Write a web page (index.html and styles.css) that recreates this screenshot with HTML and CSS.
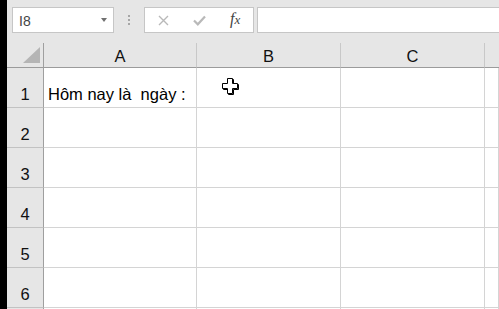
FILE: index.html
```html
<!DOCTYPE html>
<html>
<head>
<meta charset="utf-8">
<link rel="stylesheet" href="styles.css">
</head>
<body>
<div class="app">
  <div class="edge"></div>
  <div class="main">
    <div class="formula-row">
      <div class="namebox">
        <span class="name">I8</span>
        <span class="dd"></span>
      </div>
      <div class="grip"><i></i><i></i><i></i></div>
      <div class="fbtns">
        <svg class="ico x" width="11" height="11" viewBox="0 0 11 11"><path d="M1 1 L10 10 M10 1 L1 10" stroke="#b9b9b9" stroke-width="1.4" fill="none"/></svg>
        <svg class="ico ok" width="13" height="11" viewBox="0 0 13 11"><path d="M1 5.5 L4.8 9.3 L12 1.5" stroke="#b9b9b9" stroke-width="2.2" fill="none"/></svg>
        <span class="fx">f<span class="fxx">x</span></span>
      </div>
      <div class="fbar"></div>
    </div>
    <div class="grid">
      <div class="corner"><span class="tri"></span></div>
      <div class="ch">A</div>
      <div class="ch">B</div>
      <div class="ch">C</div>
      <div class="ch last"></div>

      <div class="rh">1</div>
      <div class="cell"><span class="txt">Hôm nay là  ngày :</span></div>
      <div class="cell"></div><div class="cell"></div><div class="cell"></div>

      <div class="rh">2</div>
      <div class="cell"></div><div class="cell"></div><div class="cell"></div><div class="cell"></div>

      <div class="rh">3</div>
      <div class="cell"></div><div class="cell"></div><div class="cell"></div><div class="cell"></div>

      <div class="rh">4</div>
      <div class="cell"></div><div class="cell"></div><div class="cell"></div><div class="cell"></div>

      <div class="rh">5</div>
      <div class="cell"></div><div class="cell"></div><div class="cell"></div><div class="cell"></div>

      <div class="rh">6</div>
      <div class="cell"></div><div class="cell"></div><div class="cell"></div><div class="cell"></div>

      <div class="rh"></div>
      <div class="cell"></div><div class="cell"></div><div class="cell"></div><div class="cell"></div>
    </div>
  </div>
  <svg class="cursor" width="18" height="18" viewBox="0 0 18 18">
    <path d="M6.5 1.5 H11.5 V6.5 H16.5 V11.5 H11.5 V16.5 H6.5 V11.5 H1.5 V6.5 H6.5 Z" fill="none" stroke="#000" stroke-width="1"/>
    <path d="M5.5 0.5 H10.5 V5.5 H15.5 V10.5 H10.5 V15.5 H5.5 V10.5 H0.5 V5.5 H5.5 Z" fill="#fff" stroke="#000" stroke-width="1"/>
  </svg>
</div>
</body>
</html>
```

FILE: styles.css
```css
html, body {
  margin: 0;
  padding: 0;
}
body {
  background: #e6e6e6;
  font-family: "Liberation Sans", Arial, sans-serif;
  overflow: hidden;
}
.app {
  position: relative;
  display: flex;
  width: 499px;
  height: 309px;
  overflow: hidden;
}
.edge {
  width: 7px;
  flex: none;
  background: #000;
}
.main {
  flex: 1;
  min-width: 0;
  background: #e6e6e6;
}
.formula-row {
  height: 43px;
  box-sizing: border-box;
  padding: 7px 0 0 5px;
  display: flex;
  align-items: flex-start;
}
.namebox {
  width: 102px;
  height: 26px;
  box-sizing: border-box;
  border: 1px solid #c6c6c6;
  background: #fff;
  display: flex;
  align-items: center;
  padding-left: 6px;
  padding-right: 6px;
}
.name {
  flex: 1;
  font-size: 14px;
  color: #444;
  line-height: 16px;
  padding-top: 1px;
}
.dd {
  width: 0;
  height: 0;
  border-left: 3.5px solid transparent;
  border-right: 3.5px solid transparent;
  border-top: 4px solid #707070;
  margin-top: -1px;
}
.grip {
  width: 30px;
  height: 26px;
  display: flex;
  flex-direction: column;
  align-items: center;
  padding-top: 8px;
  box-sizing: border-box;
  gap: 2px;
}
.grip i {
  display: block;
  width: 2px;
  height: 2px;
  background: #a6a6a6;
}
.fbtns {
  width: 110px;
  height: 26px;
  box-sizing: border-box;
  border: 1px solid #c6c6c6;
  background: #fff;
  display: flex;
  align-items: center;
  position: relative;
}
.ico {
  display: block;
}
.ico.x {
  margin-left: 13px;
}
.ico.ok {
  margin-left: 24px;
}
.fx {
  margin-left: 24px;
  font-family: "Liberation Serif", "DejaVu Serif", serif;
  font-style: italic;
  font-size: 16px;
  color: #444;
  line-height: 16px;
  margin-top: -2px;
}
.fxx {
  font-size: 13px;
}
.fbar {
  margin-left: 3px;
  flex: 1;
  height: 26px;
  box-sizing: border-box;
  border: 1px solid #c6c6c6;
  border-right: none;
  background: #fff;
}
.grid {
  display: grid;
  grid-template-columns: 37px 153px 144px 144px 1fr;
  grid-template-rows: 25px repeat(6, 40px) 10px;
}
.grid > div {
  box-sizing: border-box;
}
.corner {
  border-right: 1px solid #9f9f9f;
  border-bottom: 1px solid #9b9b9b;
  position: relative;
}
.tri {
  position: absolute;
  left: 16px;
  top: 4px;
  width: 0;
  height: 0;
  border-left: 17px solid transparent;
  border-bottom: 16px solid #b5b5b5;
}
.ch {
  border-right: 1px solid #c8c8c8;
  border-bottom: 1px solid #9b9b9b;
  display: flex;
  align-items: flex-end;
  justify-content: center;
  font-size: 16.5px;
  line-height: 19px;
  padding-bottom: 1px;
  color: #111;
}
.ch.last {
  border-right: none;
}
.rh {
  border-right: 1px solid #9f9f9f;
  border-bottom: 1px solid #c2c2c2;
  display: flex;
  align-items: flex-end;
  justify-content: center;
  font-size: 16.5px;
  line-height: 19px;
  padding-bottom: 3px;
  color: #111;
}
.cell {
  background: #fff;
  border-right: 1px solid #d4d4d4;
  border-bottom: 1px solid #d4d4d4;
  display: flex;
  align-items: flex-end;
  padding: 0 0 3px 4px;
}
.txt {
  font-size: 16.5px;
  line-height: 19px;
  white-space: pre;
  color: #000;
}
.cursor {
  position: absolute;
  left: 222px;
  top: 78px;
}
```
